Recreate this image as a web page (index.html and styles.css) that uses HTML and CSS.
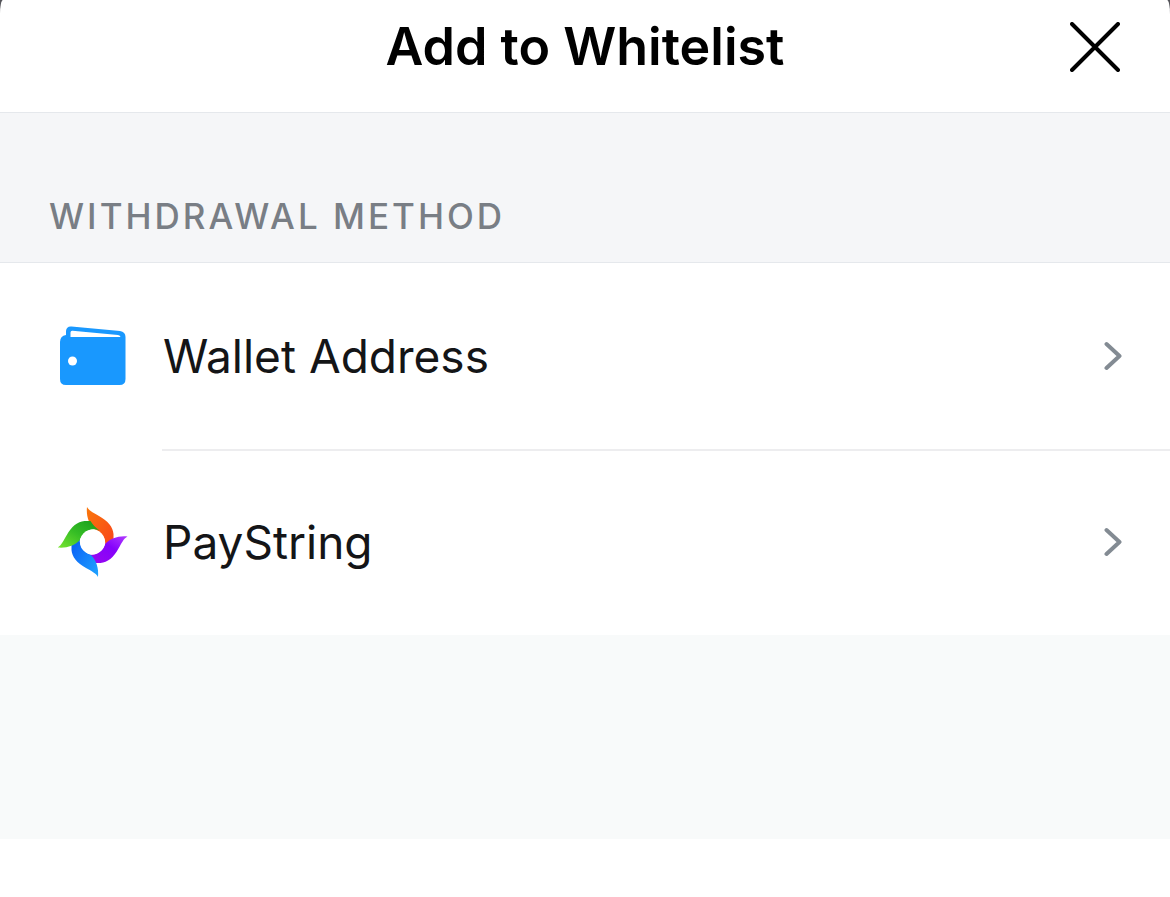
FILE: index.html
```html
<!DOCTYPE html>
<html lang="en">
<head>
<meta charset="utf-8">
<meta name="viewport" content="width=device-width, initial-scale=1">
<title>Add to Whitelist</title>
<link rel="stylesheet" href="styles.css">
</head>
<body>
<main class="sheet">
  <header class="header">
    <h1 class="title">Add to Whitelist</h1>
    <button class="close" type="button" aria-label="Close">
      <svg width="50" height="50" viewBox="0 0 50 50" fill="none" stroke="#000" stroke-width="4" stroke-linecap="round">
        <path d="M2 2 48 48M48 2 2 48"/>
      </svg>
    </button>
  </header>
  <section class="methods">
    <h2 class="section-title">WITHDRAWAL METHOD</h2>
    <ul class="list">
      <li class="item">
        <button class="row" type="button">
          <svg class="icon" width="70" height="70" viewBox="0 0 70 70">
            <path d="M2 21Q2 15 8 14V10Q8.500 5 13.500 5.500L62 10Q67.500 11 67.500 16V58Q67.500 64 61.500 64H8Q2 64 2 58Z" fill="#1998fe"/>
            <path d="M12.500 16V11.500Q12.500 9.500 14.500 9.700L60 14Q62.500 14.500 62.500 16Z" fill="#fff"/>
            <circle cx="14.500" cy="40" r="4.500" fill="#fff"/>
          </svg>
          <span class="label">Wallet Address</span>
          <svg class="chevron" width="18" height="30" viewBox="0 0 18 30" fill="none" stroke="#838b93" stroke-width="4" stroke-linecap="round" stroke-linejoin="round">
            <path d="M2.500 3 15.500 15 2.500 27"/>
          </svg>
        </button>
      </li>
      <li class="item">
        <button class="row" type="button">
          <svg class="icon" width="70" height="70" viewBox="0 0 70 70">
            <defs>
              <linearGradient id="orange" x1="0" y1="0" x2="1" y2="1"><stop stop-color="#f9770b"/><stop offset="1" stop-color="#f9431b"/></linearGradient>
              <linearGradient id="purple" x1="0" y1="0" x2="1" y2="1"><stop stop-color="#b23cff"/><stop offset=".4" stop-color="#8502fb"/><stop offset="1" stop-color="#9b09ee"/></linearGradient>
              <linearGradient id="blue" x1="0" y1="0" x2="1" y2="1"><stop stop-color="#20a5ff"/><stop offset="1" stop-color="#0758f5"/></linearGradient>
              <linearGradient id="green" x1="0" y1="0" x2="1" y2="1"><stop stop-color="#78e530"/><stop offset=".5" stop-color="#35bd25"/><stop offset="1" stop-color="#169b1b"/></linearGradient>
              <path id="blade" d="M29 0C31 4 36 6 41 9C50 14 55 20 55.500 27V33C52 35 49 38 46 42C50 33 44 25 36 22C31 17 28 9 29 0Z"/>
            </defs>
            <use href="#blade" fill="url(#orange)"/>
            <use href="#blade" fill="url(#purple)" transform="rotate(90 34.500 35)"/>
            <use href="#blade" fill="url(#blue)" transform="rotate(180 34.500 35)"/>
            <use href="#blade" fill="url(#green)" transform="rotate(270 34.500 35)"/>
            <circle cx="34.500" cy="35" r="12.500" fill="#fff"/>
          </svg>
          <span class="label">PayString</span>
          <svg class="chevron" width="18" height="30" viewBox="0 0 18 30" fill="none" stroke="#838b93" stroke-width="4" stroke-linecap="round" stroke-linejoin="round">
            <path d="M2.500 3 15.500 15 2.500 27"/>
          </svg>
        </button>
      </li>
    </ul>
  </section>
  <div class="footer-band"></div>
</main>
</body>
</html>
```
FILE: styles.css
```css
* {
  box-sizing: border-box;
}

html {
  background: #55555a;
}

body {
  margin: 0;
  font-family: Inter, Roboto, "Liberation Sans", sans-serif;
}

.sheet {
  min-height: 100vh;
  background: #fff;
  border-radius: 3px 3px 0 0 / 14px 14px 0 0;
}

button {
  margin: 0;
  padding: 0;
  border: 0;
  background: none;
  color: inherit;
  font: inherit;
  cursor: pointer;
}

svg {
  display: block;
  flex: none;
}

.header {
  display: grid;
  grid-template-columns: 50px 1fr 50px;
  align-items: center;
  padding: 15px 50px 33px;
  border-bottom: 1px solid #e5e8ec;
}

.title {
  grid-column: 2;
  margin: 0;
  font-size: 52px;
  line-height: 64px;
  font-weight: 600;
  text-align: center;
}

.section-title {
  margin: 0;
  padding: 81px 49px 24px;
  border-bottom: 1px solid #e5e8ec;
  background: #f5f6f8;
  color: #797e85;
  font-size: 35px;
  line-height: 44px;
  font-weight: 500;
  letter-spacing: 3px;
}

.list {
  margin: 0;
  padding: 0;
  list-style: none;
}

.item + .item::before {
  content: "";
  display: block;
  height: 2px;
  margin: 0 0 -2px 162px;
  background: #ededef;
}

.row {
  display: flex;
  align-items: center;
  width: 100%;
  padding: 58px 48px 58px 58px;
  color: #141517;
  text-align: left;
}

.label {
  flex: 1;
  margin-left: 35px;
  font-size: 46px;
  line-height: 70px;
}

.footer-band {
  height: 204px;
  background: #f8fafa;
}
```
